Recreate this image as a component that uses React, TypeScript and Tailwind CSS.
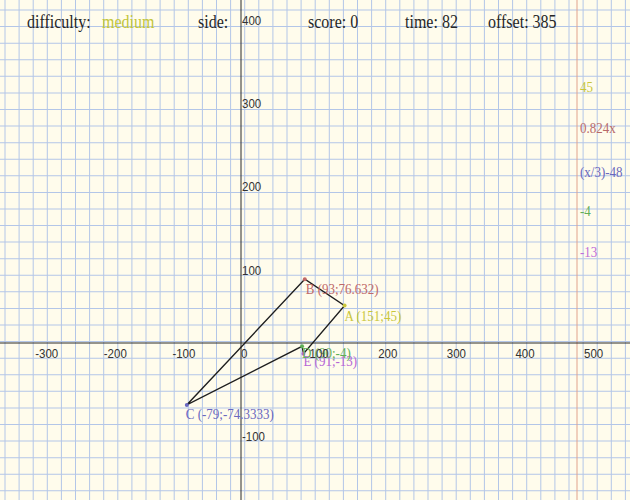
import React from "react";

const S = 1.18;
const W = 630;
const H = 500 / S;
const y = (p: number) => p / S;
const px = (v: number) => 241 + 0.686 * v;
const py = (v: number) => 343 - 0.8325 * v;

const serif = '"Liberation Serif", "Times New Roman", serif';
const sans = '"Liberation Sans", Arial, sans-serif';

const pts = {
  A: { x: px(151), y: py(45), c: "#c9c63a", label: "A (151;45)", lx: 0, ly: 15.5 },
  B: { x: px(93), y: py(76.632), c: "#c06868", label: "B (93;76.632)", lx: 1, ly: 15 },
  C: { x: px(-79), y: py(-74.3333), c: "#6a68c0", label: "C (-79;-74.3333)", lx: -1, ly: 14 },
  D: { x: px(89), y: py(-4), c: "#5fae55", label: "D (90;-4)", lx: 0, ly: 12 },
  E: { x: px(91), y: py(-13), c: "#b666d6", label: "E (91;-13)", lx: 0, ly: 12 },
};

function Plot() {
  const vlines: number[] = [];
  for (let k = 0; k <= 45; k++) vlines.push(5 + k * 14.1);
  const hlines: number[] = [];
  for (let k = 0; k <= 30; k++) hlines.push(10 + k * 16.58);
  const xl = [-300, -200, -100, 0, 100, 200, 300, 400, 500];
  const yl = [400, 300, 200, 100, -100];
  const order = [pts.C, pts.B, pts.A, pts.E, pts.D];
  const poly = order.map((p) => `${p.x},${y(p.y)}`).join(" ");
  const right = [
    { t: "45", b: 92, c: "#c9c63a" },
    { t: "0.824x", b: 133, c: "#b86a6a" },
    { t: "(x/3)-48", b: 177, c: "#6a68bd" },
    { t: "-4", b: 216, c: "#62ae58" },
    { t: "-13", b: 257, c: "#c06ed8" },
  ];
  return (
    <svg
      className="absolute inset-0"
      width={630}
      height={500}
      viewBox={`0 0 ${W} ${H}`}
      preserveAspectRatio="none"
    >
      <rect x={0} y={0} width={W} height={H} fill="#fffcec" />
      {vlines.map((v, i) => (
        <line key={"v" + i} x1={v} x2={v} y1={0} y2={H} stroke="#b3c6e8" strokeWidth={1} />
      ))}
      {hlines.map((h, i) => (
        <line key={"h" + i} x1={0} x2={W} y1={y(h)} y2={y(h)} stroke="#b3c6e8" strokeWidth={0.85} />
      ))}
      <line x1={577} x2={577} y1={0} y2={H} stroke="#e2a28c" strokeWidth={1} />
      <line x1={241} x2={241} y1={0} y2={H} stroke="#2a2a2a" strokeWidth={1} />
      <line x1={0} x2={W} y1={y(343)} y2={y(343)} stroke="#2a2a2a" strokeWidth={0.85} />
      <polygon points={poly} fill="none" stroke="#1e1e1e" strokeWidth={1.2} />
      {order.map((p, i) => (
        <ellipse key={"p" + i} cx={p.x} cy={y(p.y)} rx={2} ry={2 / S} fill={p.c} />
      ))}
      {order.map((p, i) => (
        <text
          key={"l" + i}
          x={p.x + p.lx}
          y={y(p.y + p.ly)}
          fill={p.c}
          fontFamily={serif}
          fontSize={13}
        >
          {p.label}
        </text>
      ))}
      {xl.map((v) => (
        <text key={"x" + v} x={px(v)} y={y(358)} fill="#333" fontFamily={sans} fontSize={11.5}>
          {v}
        </text>
      ))}
      {yl.map((v) => (
        <text key={"y" + v} x={242} y={y(py(v) + 15)} fill="#333" fontFamily={sans} fontSize={11.5}>
          {v}
        </text>
      ))}
      {right.map((r) => (
        <text key={r.t} x={580} y={y(r.b)} fill={r.c} fontFamily={serif} fontSize={13}>
          {r.t}
        </text>
      ))}
    </svg>
  );
}

export default function App() {
  return (
    <div className="relative w-[630px] h-[500px] overflow-hidden bg-[#fffcec]">
      <Plot />
      <div
        className="relative flex origin-top-left scale-y-[1.18] pt-[9px] pl-[27px] text-[16px] leading-[20px] text-[#262626]"
        style={{ fontFamily: serif }}
      >
        <span className="w-[75px] shrink-0">difficulty:</span>
        <span className="w-[96px] shrink-0 text-[#c2c53a]">medium</span>
        <span className="w-[110px] shrink-0">side:</span>
        <span className="w-[97px] shrink-0">score: 0</span>
        <span className="w-[83px] shrink-0">time: 82</span>
        <span className="shrink-0">offset: 385</span>
      </div>
    </div>
  );
}
